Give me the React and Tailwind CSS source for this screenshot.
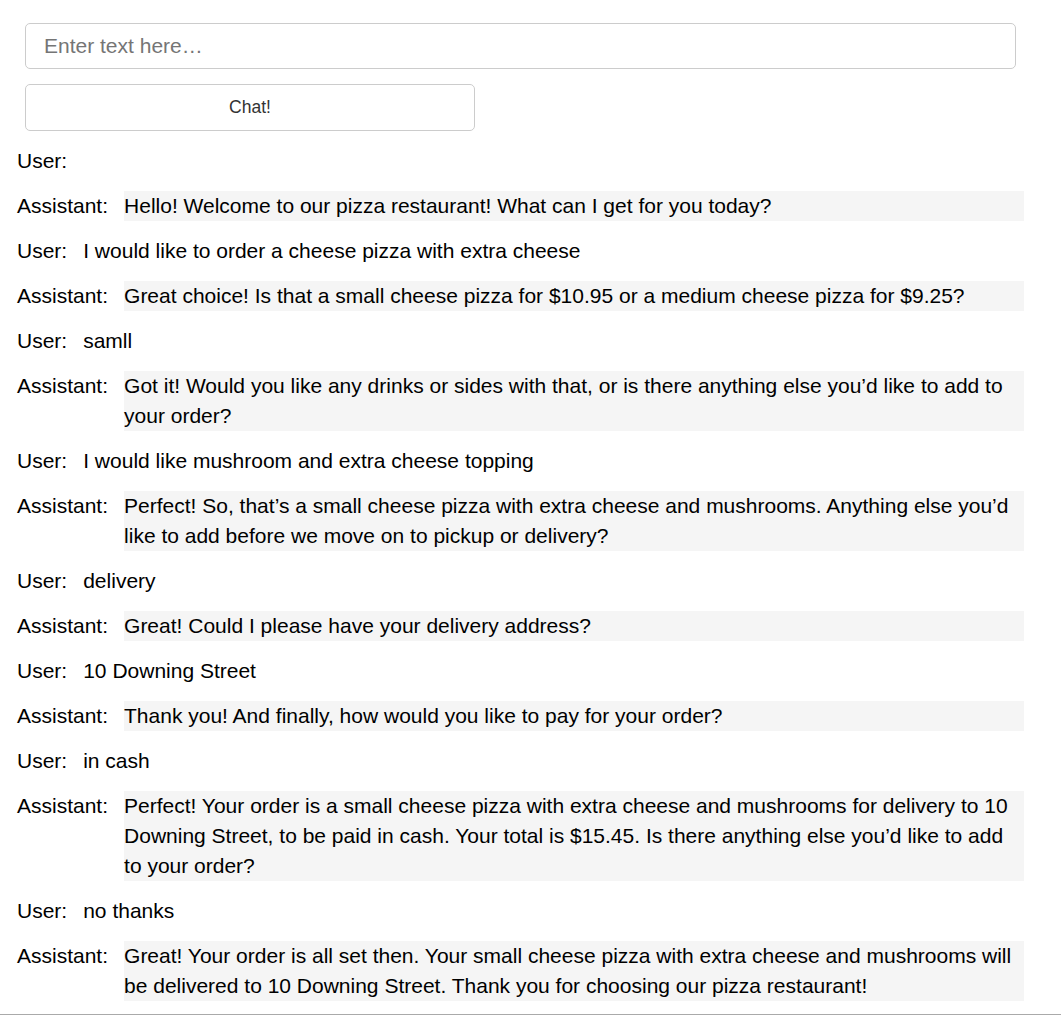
import React from "react";

const msgs = [
  ["User", ""],
  ["Assistant", "Hello! Welcome to our pizza restaurant! What can I get for you today?"],
  ["User", "I would like to order a cheese pizza with extra cheese"],
  ["Assistant", "Great choice! Is that a small cheese pizza for $10.95 or a medium cheese pizza for $9.25?"],
  ["User", "samll"],
  ["Assistant", "Got it! Would you like any drinks or sides with that, or is there anything else you\u2019d like to add to your order?"],
  ["User", "I would like mushroom and extra cheese topping"],
  ["Assistant", "Perfect! So, that\u2019s a small cheese pizza with extra cheese and mushrooms. Anything else you\u2019d like to add before we move on to pickup or delivery?"],
  ["User", "delivery"],
  ["Assistant", "Great! Could I please have your delivery address?"],
  ["User", "10 Downing Street"],
  ["Assistant", "Thank you! And finally, how would you like to pay for your order?"],
  ["User", "in cash"],
  ["Assistant", "Perfect! Your order is a small cheese pizza with extra cheese and mushrooms for delivery to 10 Downing Street, to be paid in cash. Your total is $15.45. Is there anything else you\u2019d like to add to your order?"],
  ["User", "no thanks"],
  ["Assistant", "Great! Your order is all set then. Your small cheese pizza with extra cheese and mushrooms will be delivered to 10 Downing Street. Thank you for choosing our pizza restaurant!"],
];

export default function App() {
  return (
    <div className="bg-white text-black font-[family-name:'Liberation_Sans',Arial,sans-serif] pt-[23px] min-h-[1019px]">
      <div className="pl-[25px]">
        <input
          type="text"
          placeholder="Enter text here…"
          className="block w-[991px] h-[46px] border border-[#cccccc] rounded-[5px] px-[18px] text-[21px] font-[family-name:'Liberation_Sans',Arial,sans-serif] placeholder:text-[#757575] outline-none"
        />
        <button className="mt-[15px] block w-[450px] h-[47px] border border-[#cccccc] rounded-[5px] bg-white text-[17.5px] text-[#333333] font-[family-name:'Liberation_Sans',Arial,sans-serif]">
          Chat!
        </button>
      </div>
      <div className="pl-[17px] w-[1024px] mt-[15px] flex flex-col gap-[15px]">
        {msgs.map(([who, text], i) => (
          <div key={i} className="flex text-[21px] leading-[30px]">
            <span className="shrink-0 pr-[16px]">{who}:</span>
            {who === "Assistant" ? (
              <span className="flex-1 bg-[#f5f5f5]">{text}</span>
            ) : (
              <span className="flex-1">{text}</span>
            )}
          </div>
        ))}
      </div>
      <div className="mt-[13px] border-t border-[#aaaaaa]" />
    </div>
  );
}
